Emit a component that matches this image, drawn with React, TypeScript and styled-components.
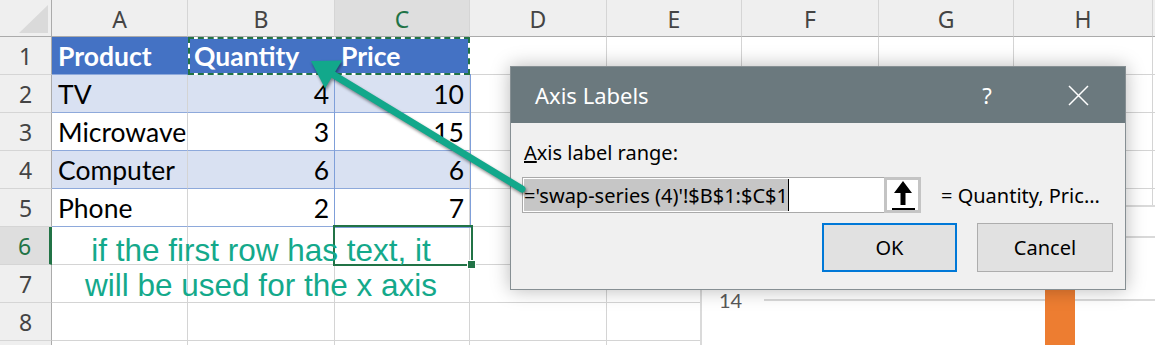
import styled, { createGlobalStyle } from 'styled-components';

const GlobalStyle = createGlobalStyle`
  html, body {
    margin: 0;
    padding: 0;
    background: #ffffff;
  }
  body {
    overflow: hidden;
  }
`;

type Kind = 'head' | 'band' | 'plain' | 'empty';

const columns = [
  { id: 'A', width: 136 },
  { id: 'B', width: 147 },
  { id: 'C', width: 135 },
  { id: 'D', width: 137 },
  { id: 'E', width: 135 },
  { id: 'F', width: 137 },
  { id: 'G', width: 135 },
  { id: 'H', width: 139 },
];

const table: { kind: Kind; values: string[] }[] = [
  { kind: 'head', values: ['Product', 'Quantity', 'Price'] },
  { kind: 'band', values: ['TV', '4', '10'] },
  { kind: 'plain', values: ['Microwave', '3', '15'] },
  { kind: 'band', values: ['Computer', '6', '6'] },
  { kind: 'plain', values: ['Phone', '2', '7'] },
];

const ACTIVE_COL = 'C';
const ACTIVE_ROW = 6;
const ROW_COUNT = 9;
const NUMBERED_ROWS = 8;

const fills: Record<Kind, string> = {
  head: '#4472c4',
  band: '#d9e1f2',
  plain: '#ffffff',
  empty: '#ffffff',
};

export default function App() {
  return (
    <>
      <GlobalStyle />
      <Page>
        <Sheet>
          <Corner $c={1} $r={1}>
            <svg width="52" height="37" viewBox="0 0 52 37">
              <polygon points="19,33 48,33 48,5" fill="#dadada" />
            </svg>
          </Corner>
          {columns.map((col, i) => (
            <ColHead key={col.id} $c={i + 2} $r={1} $active={col.id === ACTIVE_COL}>
              {col.id}
            </ColHead>
          ))}
          <ColHead $c={columns.length + 2} $r={1} />

          {Array.from({ length: ROW_COUNT }, (_, ri) => {
            const rowNo = ri + 1;
            const data = table[ri];
            return [
              <RowHead key={`h${rowNo}`} $c={1} $r={ri + 2} $active={rowNo === ACTIVE_ROW}>
                {rowNo <= NUMBERED_ROWS ? rowNo : ''}
              </RowHead>,
              ...columns.map((col, ci) => {
                const inTable = !!data && ci < 3;
                return (
                  <Cell
                    key={`${col.id}${rowNo}`}
                    $c={ci + 2}
                    $r={ri + 2}
                    $kind={inTable ? data.kind : 'empty'}
                    $num={inTable && data.kind !== 'head' && ci > 0}
                    $inTable={inTable}
                  >
                    {inTable ? data.values[ci] : ''}
                  </Cell>
                );
              }),
              <Cell key={`t${rowNo}`} $c={columns.length + 2} $r={ri + 2} $kind="empty" />,
            ];
          })}

          <RangeFrame />
          <Marquee />
          <ActiveCell />
          <Note>{'if the first row has text, it\nwill be used for the x axis'}</Note>
        </Sheet>

        <Chart>
          <Axis>
            <AxisRow>
              <AxisLabel>16</AxisLabel>
              <GridLine />
            </AxisRow>
            <AxisRow>
              <AxisLabel>14</AxisLabel>
              <GridLine />
            </AxisRow>
          </Axis>
          <Bar />
        </Chart>

        <Dialog>
          <TitleBar>
            <Title>Axis Labels</Title>
            <TitleButtons>
              <TitleButton>?</TitleButton>
              <TitleButton>
                <svg width="21" height="21" viewBox="0 0 21 21">
                  <path d="M1 1 L20 20 M20 1 L1 20" stroke="#ffffff" strokeWidth="1.5" />
                </svg>
              </TitleButton>
            </TitleButtons>
          </TitleBar>
          <Body>
            <FieldLabel>
              <u>A</u>xis label range:
            </FieldLabel>
            <FieldRow>
              <RangeInput>
                <Selected>='swap-series (4)'!$B$1:$C$1</Selected>
                <RefButton>
                  <svg width="26" height="32" viewBox="0 0 26 32">
                    <path d="M13 2 L4 14 L10.5 14 L10.5 26 L15.5 26 L15.5 14 L22 14 Z" fill="#000" />
                    <rect x="2" y="29" width="23" height="2" fill="#000" />
                  </svg>
                </RefButton>
              </RangeInput>
              <Preview>= Quantity, Pric...</Preview>
            </FieldRow>
            <Actions>
              <DialogButton $primary>OK</DialogButton>
              <DialogButton>Cancel</DialogButton>
            </Actions>
          </Body>
        </Dialog>

        <Pointer width="1155" height="345" viewBox="0 0 1155 345">
          <line x1="333" y1="74.5" x2="522" y2="189" stroke="#12a88b" strokeWidth="7" strokeLinecap="round" />
          <polygon points="311,61 342,60.5 325,88.5" fill="#12a88b" />
        </Pointer>
      </Page>
    </>
  );
}

const Page = styled.div`
  position: relative;
  width: 1155px;
  height: 345px;
  overflow: hidden;
  background: #ffffff;
`;

const Sheet = styled.div`
  display: grid;
  grid-template-columns: 52px ${columns.map((c) => `${c.width}px`).join(' ')} 40px;
  grid-template-rows: 37px repeat(${ROW_COUNT}, 38px);
`;

const Placed = styled.div<{ $c: number; $r: number }>`
  grid-column: ${(p) => p.$c};
  grid-row: ${(p) => p.$r};
  box-sizing: border-box;
  min-width: 0;
`;

const Corner = styled(Placed)`
  background: #efefef;
  border-right: 1px solid #ababab;
  border-bottom: 1px solid #ababab;
  svg {
    display: block;
  }
`;

const ColHead = styled(Placed)<{ $active?: boolean }>`
  background: ${(p) => (p.$active ? '#dedede' : '#efefef')};
  border-right: 1px solid #d5d5d5;
  border-bottom: 1px solid #ababab;
  color: ${(p) => (p.$active ? '#217346' : '#444444')};
  font-family: 'Noto Sans', 'Segoe UI', sans-serif;
  font-size: 23px;
  line-height: 33px;
  padding-top: 3px;
  text-align: center;
`;

const RowHead = styled(Placed)<{ $active?: boolean }>`
  background: ${(p) => (p.$active ? '#dedede' : '#efefef')};
  border-right: ${(p) => (p.$active ? '3px solid #217346' : '1px solid #ababab')};
  border-bottom: 1px solid #d5d5d5;
  color: ${(p) => (p.$active ? '#217346' : '#444444')};
  font-family: 'Noto Sans', 'Segoe UI', sans-serif;
  font-size: 23px;
  line-height: 35px;
  padding-top: 2px;
  text-align: center;
`;

const Cell = styled(Placed)<{ $kind: Kind; $num?: boolean; $inTable?: boolean }>`
  padding: 0 5px 0 6px;
  background: ${(p) => fills[p.$kind]};
  border-right: 1px solid ${(p) => (p.$kind === 'head' ? '#4472c4' : '#d4d4d4')};
  border-bottom: 1px solid ${(p) => (p.$inTable ? '#8ea9db' : '#d4d4d4')};
  color: ${(p) => (p.$kind === 'head' ? '#ffffff' : '#000000')};
  font-family: Lato, 'Noto Sans', sans-serif;
  font-weight: ${(p) => (p.$kind === 'head' ? 700 : 400)};
  font-size: 26.5px;
  line-height: 38px;
  text-align: ${(p) => (p.$num ? 'right' : 'left')};
  white-space: nowrap;
`;

const RangeFrame = styled.div`
  grid-column: 4;
  grid-row: 3 / 7;
  margin: -1px -1px -1px -1px;
  border: 1px solid #7f9fd9;
  z-index: 2;
`;

const Marquee = styled.div`
  grid-column: 3 / 5;
  grid-row: 2;
  position: relative;
  border: 2px solid #ffffff;
  z-index: 3;
  &::after {
    content: '';
    position: absolute;
    inset: -2px;
    border: 2px dashed #217346;
  }
`;

const ActiveCell = styled.div`
  grid-column: 4;
  grid-row: 7;
  position: relative;
  margin: -2px -3px -1px -2px;
  border: 2px solid #217346;
  z-index: 3;
  &::after {
    content: '';
    position: absolute;
    right: -5px;
    bottom: -5px;
    width: 7px;
    height: 7px;
    background: #217346;
    border: 1px solid #ffffff;
  }
`;

const Note = styled.div`
  grid-column: 2 / 5;
  grid-row: 7 / 9;
  z-index: 4;
  padding-top: 6px;
  color: #14a98b;
  font-family: 'Liberation Sans', Arial, sans-serif;
  font-size: 31.5px;
  line-height: 35px;
  text-align: center;
  white-space: pre;
`;

const Chart = styled.div`
  position: absolute;
  left: 700px;
  top: 205px;
  width: 520px;
  height: 170px;
  box-sizing: border-box;
  background: #ffffff;
  border: 2px solid #dadada;
  z-index: 5;
`;

const Axis = styled.div`
  display: flex;
  flex-direction: column;
  gap: 33px;
  padding-top: 15px;
`;

const AxisRow = styled.div`
  display: flex;
  align-items: center;
  height: 30px;
`;

const AxisLabel = styled.div`
  width: 62px;
  box-sizing: border-box;
  padding-left: 17px;
  color: #595959;
  font-family: Lato, 'Noto Sans', sans-serif;
  font-size: 20px;
`;

const GridLine = styled.div`
  flex: 1;
  height: 2px;
  background: #d9d9d9;
`;

const Bar = styled.div`
  position: absolute;
  left: 343px;
  top: 60px;
  bottom: 0;
  width: 30px;
  background: #ed7d31;
`;

const Dialog = styled.div`
  position: absolute;
  left: 510px;
  top: 66px;
  width: 616px;
  box-sizing: border-box;
  display: flex;
  flex-direction: column;
  background: #f0f0f0;
  border: 1px solid #868f93;
  box-shadow: 0 0 18px rgba(0, 0, 0, 0.28);
  font-family: 'Noto Sans', 'Segoe UI', sans-serif;
  z-index: 10;
`;

const TitleBar = styled.div`
  display: flex;
  align-items: center;
  justify-content: space-between;
  height: 56px;
  padding-left: 24px;
  padding-right: 24px;
  background: #6b797e;
  color: #ffffff;
`;

const Title = styled.div`
  font-size: 22px;
`;

const TitleButtons = styled.div`
  display: flex;
  gap: 45px;
`;

const TitleButton = styled.div`
  width: 46px;
  display: flex;
  align-items: center;
  justify-content: center;
  font-size: 22px;
  line-height: 30px;
`;

const Body = styled.div`
  display: flex;
  flex-direction: column;
  padding: 17px 12px 17px 11px;
`;

const FieldLabel = styled.div`
  margin-left: 2px;
  font-size: 20px;
  line-height: 26px;
  color: #000000;
`;

const FieldRow = styled.div`
  display: flex;
  align-items: center;
  gap: 20px;
  margin-top: 11px;
`;

const RangeInput = styled.div`
  display: flex;
  width: 399px;
  height: 36px;
  box-sizing: border-box;
  border: 1px solid #a9a9a9;
  background: #ffffff;
  padding: 1px 0 1px 1px;
`;

const Selected = styled.div`
  display: flex;
  align-items: center;
  align-self: stretch;
  background: #c6c6c6;
  border-right: 1px solid #000000;
  color: #000000;
  font-size: 20px;
  white-space: nowrap;
`;

const RefButton = styled.div`
  margin: -2px -1px -2px auto;
  width: 37px;
  box-sizing: border-box;
  display: flex;
  align-items: center;
  justify-content: center;
  background: #ffffff;
  border: 3px solid #c4c4c4;
  svg {
    display: block;
  }
`;

const Preview = styled.div`
  font-size: 20px;
  color: #000000;
  white-space: nowrap;
`;

const Actions = styled.div`
  display: flex;
  justify-content: flex-end;
  gap: 20px;
  margin-top: 10px;
`;

const DialogButton = styled.div<{ $primary?: boolean }>`
  width: ${(p) => (p.$primary ? '135px' : '136px')};
  height: 49px;
  box-sizing: border-box;
  display: flex;
  align-items: center;
  justify-content: center;
  background: #e1e1e1;
  border: ${(p) => (p.$primary ? '2px solid #0078d7' : '1px solid #adadad')};
  color: #000000;
  font-size: 20px;
`;

const Pointer = styled.svg`
  position: absolute;
  left: 0;
  top: 0;
  pointer-events: none;
  z-index: 20;
  filter: drop-shadow(1px 2px 1.5px rgba(0, 0, 0, 0.45));
`;
